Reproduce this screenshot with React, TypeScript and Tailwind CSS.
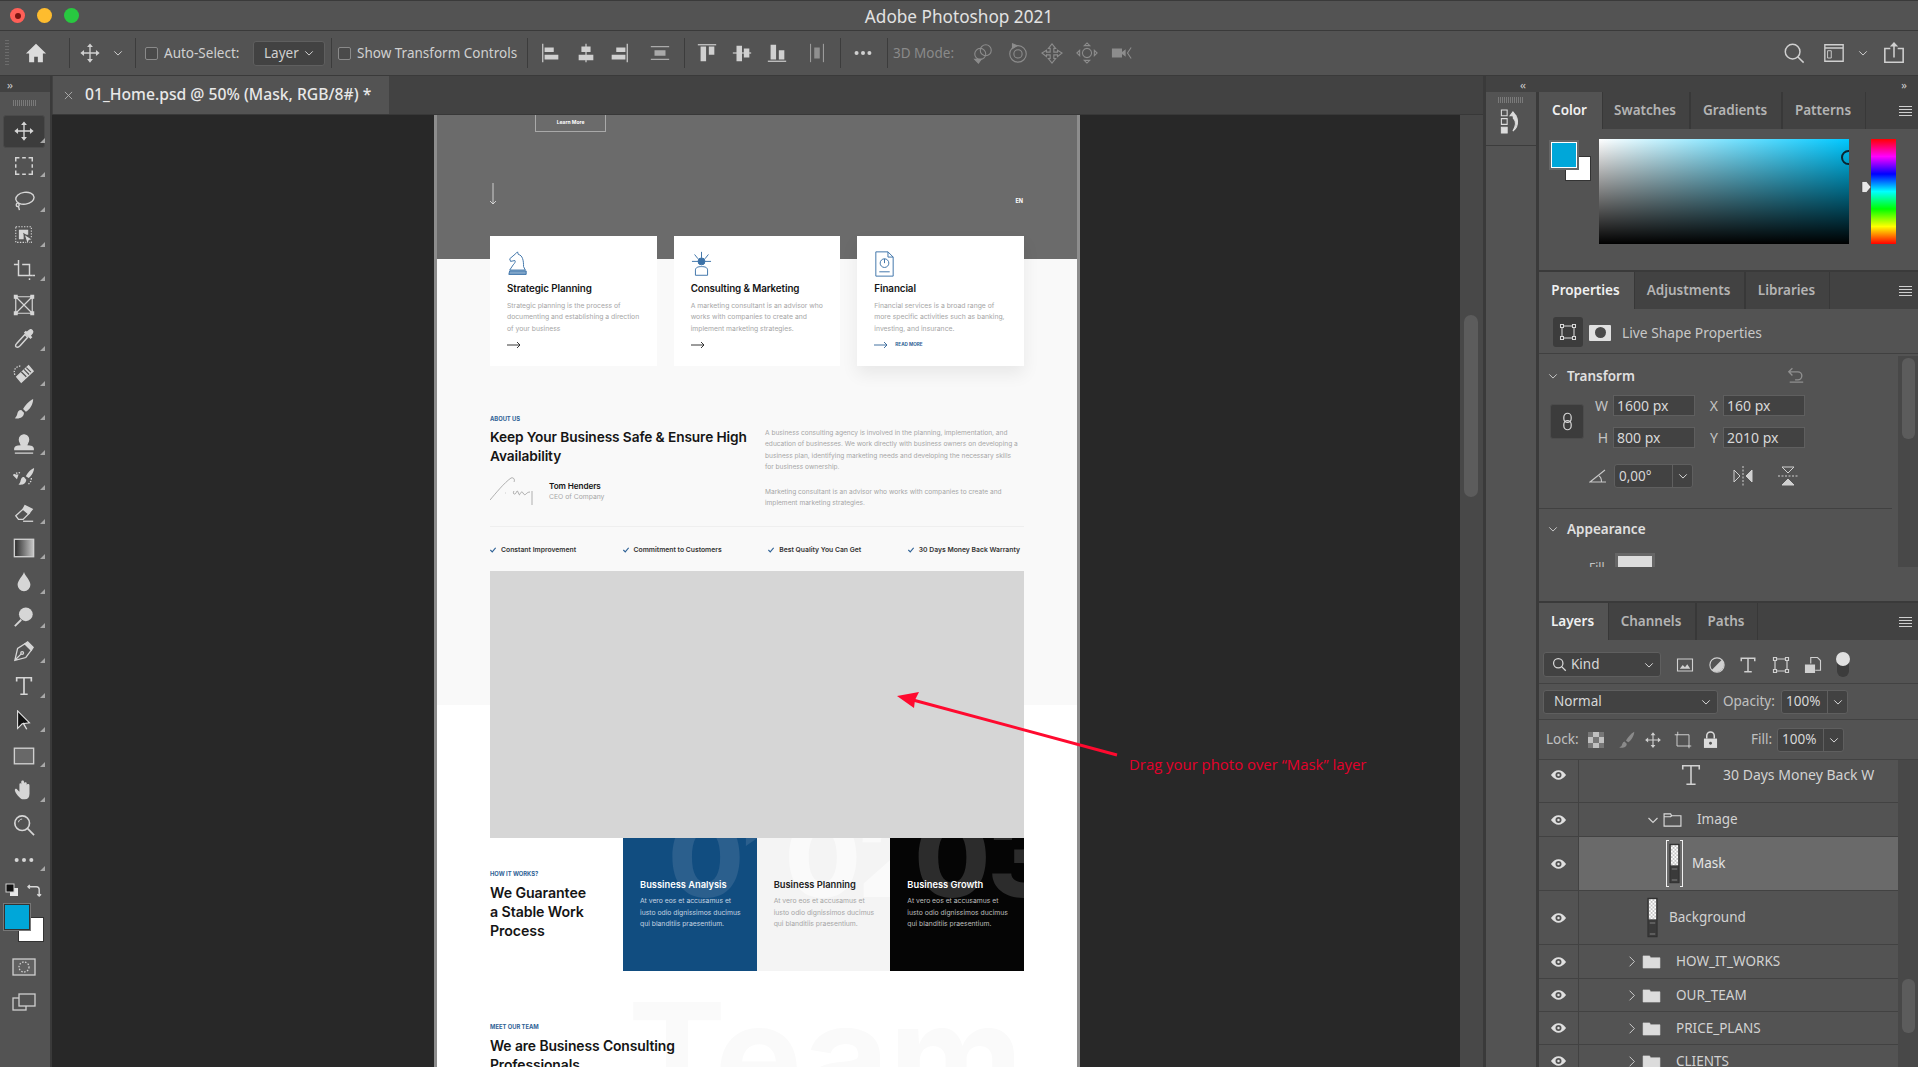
import React from "react";

const Ic = ({ children, cls = "w-[22px] h-[22px] shrink-0", sw = 1.5 }: { children: React.ReactNode; cls?: string; sw?: number }) => (
  <svg viewBox="0 0 24 24" className={cls} fill="none" stroke="currentColor" strokeWidth={sw}>{children}</svg>
);

const Chev = ({ cls = "w-[10px] h-[10px] shrink-0" }: { cls?: string }) => (
  <svg viewBox="0 0 12 12" className={cls} fill="none" stroke="currentColor" strokeWidth="1.2"><path d="M1.5 4 6 8.5 10.5 4" /></svg>
);

const Sep = ({ cls }: { cls: string }) => <div className={`w-px h-[30px] bg-[#3c3c3c] shrink-0 ${cls}`} />;

const Move = ({ cls }: { cls?: string }) => (
  <Ic cls={cls}>
    <path d="M12 4v16M4 12h16" />
    <path d="M12 1.5 8.8 5.5h6.4zM12 22.5l-3.2-4h6.4zM1.5 12l4-3.2v6.4zM22.5 12l-4-3.2v6.4z" fill="currentColor" stroke="none" />
  </Ic>
);

const Corner = () => <span className="absolute right-[5px] bottom-[6px] w-0 h-0 border-l-[5px] border-l-transparent border-b-[5px] border-b-[#a8a8a8]" />;

const tools: React.ReactNode[] = [
  <Move />,
  <Ic sw={1.6}><path d="M3 7V3h4M10 3h4M17 3h4v4M21 10v4M21 17v4h-4M14 21h-4M7 21H3v-4M3 14v-4" /></Ic>,
  <Ic><ellipse cx="13" cy="9" rx="10" ry="6.5" transform="rotate(-8 13 9)" /><path d="M5 14c-2 1-2 4 0 4s2.500-2 .5-3.500M6 18l1 4" /></Ic>,
  <Ic sw={1.2}><path d="M3 3h17v17H3z" strokeDasharray="1.5 1.5" /><path d="M7 7h9v4h-5v5H7z" fill="currentColor" /><path d="M12 11l9.500 6-4 1-1.500 5z" fill="currentColor" stroke="#535353" /></Ic>,
  <Ic sw={1.6}><path d="M1 6h5M6 1v17h15M10 6h8v12" /><path d="M21 18h3M18 21v2" /></Ic>,
  <Ic sw={1.3}><path d="M3 3h18v18H3zM3 3l18 18M21 3 3 21" /><path d="M1.500 1.500h3v3h-3zM19.500 1.500h3v3h-3zM1.500 19.500h3v3h-3zM19.500 19.500h3v3h-3z" fill="currentColor" /></Ic>,
  <Ic sw={1.6}><path d="M13 7 4 17c-2 2-1.500 4 1 4 1 0 2-1 3-2l8-9z" /><path d="M13 5l6 6 1-1-1.500-1.500 2.500-3c1.500-2-1-4.500-3-3l-3 2.500L14 4z" fill="currentColor" /></Ic>,
  <Ic sw={1.4}><path d="M9 21 22 9l-5-6L4 15z" fill="currentColor" /><path d="M9 9.500 14.500 15M12 7l5.500 5.500M14.500 5l5 5" stroke="#535353" /><path d="M2 13C0 7 3 4 9 3" strokeDasharray="1.5 1.500" /></Ic>,
  <Ic><path d="M22 1c-4 2-9 7-11 11l3 3c4-2 8-8 8-14zM9 13c-3 0-4 2-4.500 5-.3 1.500-1.500 3-2.500 4 5 1 10-1 10-6z" fill="currentColor" stroke="none" /></Ic>,
  <Ic><path d="M9 14c0-3-2-4-2-7a5 5 0 0 1 10 0c0 3-2 4-2 7 3 0 7 0 7 3v1H2v-1c0-3 4-3 7-3zM2 22h20" fill="currentColor" stroke="currentColor" /></Ic>,
  <Ic><path d="M23 1c-3 1-7 5-9 9l3 2c3-2 6-7 6-11zM12 11c-3 0-3 2-4 5-.3 1-1 2-2 3 4 1 8 0 8.500-5z" fill="currentColor" stroke="none" /><path d="M1 9c4-4 6-3 8-2M20 12c0 4-2 6-4 7" strokeDasharray="1.500 1.500" /><path d="M1 9l4 0-1 3z" fill="currentColor" /></Ic>,
  <Ic sw={1.4}><path d="M3 15 13 6l5 6-7 7H6z" /><path d="M13 4l8 4-4 5-6-5z" fill="currentColor" /><path d="M11 21h11" /></Ic>,
  <svg viewBox="0 0 24 24" className="w-[22px] h-[22px]"><defs><linearGradient id="tg"><stop offset="0" stopColor="#2a2a2a" /><stop offset="1" stopColor="#c8c8c8" /></linearGradient></defs><rect x="1.500" y="2.500" width="21" height="19" fill="url(#tg)" stroke="#cfcfcf" strokeWidth="1.500" /></svg>,
  <Ic><path d="M12 1c1 4 7 9 7 14a7 7 0 0 1-14 0c0-5 6-10 7-14z" fill="currentColor" stroke="none" /></Ic>,
  <Ic sw={2}><circle cx="14" cy="9" r="7.500" fill="currentColor" stroke="none" /><path d="M9 15l-7 7" /></Ic>,
  <Ic sw={1.4}><path d="M13 3 5 8 2 21l12-3 6-8zM2 21l7-7" /><path d="M13 3l3-2 6 6-2 3z" fill="currentColor" /><circle cx="10" cy="13" r="1.500" /></Ic>,
  <Ic sw={1.8}><path d="M4 7V3h16v4M12 3v18M8 21h8" /></Ic>,
  <svg viewBox="0 0 24 24" className="w-[22px] h-[22px]"><path d="M5 1v19l5-5 8-1z" fill="#111" stroke="#e0e0e0" strokeWidth="1.200" /><path d="M11 14l4 7" stroke="#e0e0e0" strokeWidth="1.500" /></svg>,
  <svg viewBox="0 0 24 24" className="w-[22px] h-[22px]"><rect x="1.500" y="3.500" width="21" height="17" fill="#686868" stroke="#cfcfcf" strokeWidth="1.500" /></svg>,
  <Ic><path d="M7 20c-2-2-5-6-5-8 0-1 1-2 2-1l3 3V6c0-2 2-2 2 0V3c0-2 3-2 3 0v2c0-2 3-2 3 0v2c0-2 3-2 3 0v9c0 4-2 6-5 6h-3c-1 0-2-1-3-2z" fill="currentColor" stroke="none" /></Ic>,
  <Ic sw={1.8}><circle cx="10" cy="10" r="8" /><path d="M16 16l7 7" /><path d="M6 9c0-2 2-3.500 4-3.500" strokeWidth="1" /></Ic>,
  <Ic><circle cx="4" cy="12" r="2.200" fill="currentColor" stroke="none" /><circle cx="12" cy="12" r="2.200" fill="currentColor" stroke="none" /><circle cx="20" cy="12" r="2.200" fill="currentColor" stroke="none" /></Ic>,
];

const Toolbar = () => (
  <div className="w-[50px] shrink-0 bg-[#535353] flex flex-col text-[#d6d6d6]">
    <div className="h-[16px] bg-[#424242] flex items-center pl-[7px] text-[#cfcfcf] text-[11px] leading-none tracking-[-1px]">››</div>
    <div className="h-[22px] flex items-center justify-center"><div className="w-[24px] h-[6px] bg-[repeating-linear-gradient(to_right,#7a7a7a_0,#7a7a7a_1px,transparent_1px,transparent_2px)]" /></div>
    <div className="flex flex-col">
      {tools.map((t, i) => (
        <div key={i} className="relative h-[34.7px] flex items-center justify-center pr-[3px]">
          {i === 0 && <div className="absolute left-[3px] right-[5px] top-[1px] bottom-[1px] rounded-[3px] bg-[#3c3c3c] border border-[#4a4a4a]" />}
          <span className="relative">{t}</span>
          {i !== 5 && i !== 20 && <Corner />}
        </div>
      ))}
    </div>
    <div className="h-[14px] mt-[6px] flex items-center justify-between px-[5px]">
      <svg viewBox="0 0 14 14" className="w-[14px] h-[14px]"><rect x="5" y="5" width="8" height="8" fill="#e8e8e8" /><rect x="1" y="1" width="8" height="8" fill="#111" stroke="#d0d0d0" /></svg>
      <svg viewBox="0 0 16 16" className="w-[15px] h-[15px] mr-[3px]" fill="none" stroke="#d8d8d8" strokeWidth="1.500"><path d="M1 4h9c2 0 3 1 3 3v7M3 2 1 4l2 2M11 12l2 2 2-2" /></svg>
    </div>
    <div className="relative h-[40px] mt-[6px]">
      <div className="absolute left-[18px] top-[14px] w-[26px] h-[25px] bg-white border border-[#333]" />
      <div className="absolute left-[4px] top-[1px] w-[26px] h-[26px] bg-[#00a7d9] border-[1.5px] border-[#333] outline outline-1 outline-[#777]" />
    </div>
    <div className="flex flex-col items-center pr-[3px] mt-[15px]">
      <svg viewBox="0 0 24 18" className="w-[24px] h-[18px]" fill="none" stroke="#cfcfcf" strokeWidth="1.300"><rect x="1" y="1" width="22" height="16" fill="#616161" /><circle cx="12" cy="9" r="5" strokeDasharray="1.500 1.500" /></svg>
      <svg viewBox="0 0 24 18" className="w-[24px] h-[18px] mt-[17px]" fill="none" stroke="#cfcfcf" strokeWidth="1.300"><rect x="1" y="5" width="13" height="12" /><rect x="7" y="1" width="16" height="12" fill="#535353" /></svg>
    </div>
  </div>
);

const Box = ({ cls, children }: { cls?: string; children: React.ReactNode }) => (
  <div className={`flex items-center bg-[#424242] border border-[#5f5f5f] text-[#d8d8d8] text-[14px] pl-[3px] shrink-0 ${cls}`}>{children}</div>
);

const SelectBox = ({ label, cls, lead }: { label: string; cls: string; lead?: React.ReactNode }) => (
  <div className={`flex items-center justify-between rounded-[3px] bg-[#424242] border border-[#5f5f5f] text-[#d8d8d8] text-[13.5px] shrink-0 ${cls}`}>
    <span className="flex items-center gap-[4px]">{lead}{label}</span>
    <Chev />
  </div>
);

const Combo = ({ label, cls, w2 }: { label: string; cls: string; w2: string }) => (
  <div className={`flex items-center rounded-[3px] bg-[#424242] border border-[#5f5f5f] text-[#d8d8d8] text-[13.5px] shrink-0 ${cls}`}>
    <span className="flex-1 pl-[4px]">{label}</span>
    <span className={`h-full flex items-center justify-center border-l border-[#5f5f5f] ${w2}`}><Chev /></span>
  </div>
);

const Check = ({ cls }: { cls: string }) => <div className={`w-[13px] h-[13px] rounded-[2px] border border-[#8a8a8a] bg-[#4a4a4a] shrink-0 ${cls}`} />;

const alignL = (k: number) => {
  const shapes: React.ReactNode[] = [
    <><path d="M3 2v20" /><path d="M5 6h10v5H5zM5 14h15v5H5z" fill="currentColor" stroke="none" /></>,
    <><path d="M12 2v20" /><path d="M7 5h10v6H7zM4 14h16v6H4z" fill="currentColor" stroke="none" /></>,
    <><path d="M21 2v20" /><path d="M9 6h10v5H9zM4 14h15v5H4z" fill="currentColor" stroke="none" /></>,
    <><path d="M2 5h20M2 19h20" /><path d="M6 9h12v6H6z" fill="currentColor" stroke="none" /></>,
    <><path d="M2 3h20" /><path d="M5 5h6v16H5zM14 5h6v9h-6z" fill="currentColor" stroke="none" /></>,
    <><path d="M2 12h20" /><path d="M6 4h6v17H6zM14 7h6v10h-6z" fill="currentColor" stroke="none" /></>,
    <><path d="M2 21h20" /><path d="M5 3h6v16H5zM14 9h6v10h-6z" fill="currentColor" stroke="none" /></>,
    <><path d="M5 2v20M19 2v20" /><path d="M9 6h6v12H9z" fill="currentColor" opacity=".7" stroke="none" /></>,
  ];
  return shapes[k];
};

const ThreeD = ({ k, cls }: { k: number; cls: string }) => {
  const s: React.ReactNode[] = [
    <><circle cx="9" cy="13" r="6" /><circle cx="15" cy="9" r="6" /><path d="M3 19l7 0-3 4z" fill="currentColor" /></>,
    <><circle cx="12" cy="13" r="9" /><circle cx="12" cy="13" r="4.500" /><path d="M6 2l5 2-5 3z" fill="currentColor" /></>,
    <><path d="M12 2l4 5h-2v4h4V9l5 3-5 4v-2h-4v4h2l-4 5-4-5h2v-4H6v2l-5-4 5-3v2h4V7H8z" /></>,
    <><path d="M12 7a5 5 0 1 0 .01 0zM12 1l3 3H9zM12 23l-3-3h6zM1 12l3-3v6zM23 12l-3-3v6z" fill="none" /></>,
    <><path d="M1 7h11v10H1zM12 11l4-3v8l-4-3z" fill="currentColor" stroke="none" /><path d="M22 6l-4 6 4 6" /></>,
  ];
  return <Ic cls={`w-[22px] h-[22px] shrink-0 ${cls}`} sw={1.2}>{s[k]}</Ic>;
};

const OptionsBar = () => (
  <div className="h-[45px] bg-[#535353] border-b border-[#3a3a3a] flex items-center text-[#d0d0d0] text-[13.5px] font-['Noto_Sans',sans-serif]">
    <div className="ml-[5px] w-[4px] h-[26px] bg-[repeating-linear-gradient(to_bottom,#6c6c6c_0,#6c6c6c_1px,transparent_1px,transparent_3px)]" />
    <svg viewBox="0 0 24 24" className="ml-[15.500px] w-[22px] h-[22px] shrink-0" fill="#dcdcdc"><path d="M12 2 1 12.500h3.500V22h5.500v-6h4v6h5.500v-9.500H23z" /></svg>
    <Sep cls="ml-[22.500px]" />
    <Move cls="ml-[9px] w-[22px] h-[22px] shrink-0" />
    <Chev cls="ml-[12px] w-[10px] h-[10px] shrink-0" />
    <Sep cls="ml-[12px]" />
    <Check cls="ml-[9px]" />
    <span className="ml-[6px] w-[80px] whitespace-nowrap">Auto-Select:</span>
    <div className="ml-[9px] w-[72px] h-[25px] px-[10px] rounded-[3px] bg-[#424242] border border-[#5f5f5f] flex items-center justify-between shrink-0"><span>Layer</span><Chev /></div>
    <Sep cls="ml-[6px]" />
    <Check cls="ml-[6px]" />
    <span className="ml-[6px] w-[161px] whitespace-nowrap">Show Transform Controls</span>
    <Sep cls="ml-[9px]" />
    <Ic cls="ml-[12px] w-[22px] h-[22px] shrink-0" sw={1.3}>{alignL(0)}</Ic>
    <Ic cls="ml-[13px] w-[22px] h-[22px] shrink-0" sw={1.3}>{alignL(1)}</Ic>
    <Ic cls="ml-[11px] w-[22px] h-[22px] shrink-0" sw={1.3}>{alignL(2)}</Ic>
    <Ic cls="ml-[19px] w-[22px] h-[22px] shrink-0 text-[#aaa]" sw={1.3}>{alignL(3)}</Ic>
    <Sep cls="ml-[13px]" />
    <Ic cls="ml-[11px] w-[22px] h-[22px] shrink-0" sw={1.3}>{alignL(4)}</Ic>
    <Ic cls="ml-[13px] w-[22px] h-[22px] shrink-0" sw={1.3}>{alignL(5)}</Ic>
    <Ic cls="ml-[13px] w-[22px] h-[22px] shrink-0" sw={1.3}>{alignL(6)}</Ic>
    <Ic cls="ml-[18px] w-[22px] h-[22px] shrink-0 text-[#aaa]" sw={1}>{alignL(7)}</Ic>
    <Sep cls="ml-[12px]" />
    <Ic cls="ml-[11px] w-[22px] h-[22px] shrink-0" sw={1}><circle cx="5" cy="12" r="2.200" fill="currentColor" stroke="none" /><circle cx="12" cy="12" r="2.200" fill="currentColor" stroke="none" /><circle cx="19" cy="12" r="2.200" fill="currentColor" stroke="none" /></Ic>
    <Sep cls="ml-[13px]" />
    <span className="ml-[5px] w-[61px] whitespace-nowrap text-[#8a8a8a]">3D Mode:</span>
    <div className="flex text-[#8c8c8c]">
      <ThreeD k={0} cls="ml-[18px]" />
      <ThreeD k={1} cls="ml-[13px]" />
      <ThreeD k={2} cls="ml-[12px]" />
      <ThreeD k={3} cls="ml-[13px]" />
      <ThreeD k={4} cls="ml-[13px]" />
    </div>
    <Ic cls="ml-auto w-[22px] h-[22px] shrink-0" sw={1.6}><circle cx="10.500" cy="10.500" r="8" /><path d="m16 16 6.500 6.500" /></Ic>
    <Ic cls="ml-[18px] w-[22px] h-[22px] shrink-0" sw={1.5}><path d="M2 3h20v18H2zM2 6.500h20" /><path d="M5 9.500h4v8H5z" strokeWidth="1" /></Ic>
    <Chev cls="ml-[13px] w-[10px] h-[10px] shrink-0" />
    <Ic cls="ml-[15px] mr-[13px] w-[22px] h-[22px] shrink-0" sw={1.7}><path d="M8 7H2v15h20V7h-6" /><path d="M12 17V2" /><path d="M12 0 7.500 5h9z" fill="currentColor" stroke="none" /></Ic>
  </div>
);

/* ---------- Document page ---------- */
const h3 = "font-['Inter',sans-serif] font-semibold text-[#151515] tracking-[-0.1px]";
const body = "font-['Inter',sans-serif] text-[6.8px] leading-[11.4px] text-[#a6a6a6]";
const eyebrow = "font-['Inter',sans-serif] font-bold text-[5.800px] leading-[8px] text-[#2f6296]";

const ArrowR = ({ color = "#222" }: { color?: string }) => (
  <svg viewBox="0 0 14 8" className="w-[14px] h-[8px]" fill="none" stroke={color} strokeWidth=".9"><path d="M0 4h13M10 1l3 3-3 3" /></svg>
);

const CardIcon = ({ k }: { k: number }) => (
  <svg viewBox="0 0 24 30" className="h-[26px] w-[21px]" fill="none" stroke="#3c72a8" strokeWidth="1.100">
    {k === 0 && <><path d="M10 3l2-2 1 3c5 1 6 7 6 14l2 4H3l4-6c2-2 3-4 2-5l-5 1-1-3z" /><path d="M2 27h20v-4H3z" fill="#7fa5c9" /></>}
    {k === 1 && <><circle cx="12" cy="12" r="4" fill="#3c72a8" /><path d="M12 8V1M8 9 4 4M16 9l4-5M8 12H1M16 12h7" /><path d="M5 28v-6c0-3 3-4 7-4s7 1 7 4v6z" /></>}
    {k === 2 && <><path d="M2 1h14l6 6v22H2zM16 1v6h6" /><circle cx="12" cy="14" r="5" /><path d="M12 14V9M6 24h12" /></>}
  </svg>
);

const cards = [
  { t: "Strategic Planning", b: ["Strategic planning is the process of", "documenting and establishing a direction", "of your business"] },
  { t: "Consulting & Marketing", b: ["A marketing consultant is an advisor who", "works with companies to create and", "implement marketing strategies."] },
  { t: "Financial", b: ["Financial services is a broad range of", "more specific activities such as banking,", "investing, and insurance."] },
];

const checks = ["Constant Improvement", "Commitment to Customers", "Best Quality You Can Get", "30 Days Money Back Warranty"];

const Step = ({ n, t, bg, title, text, num, numCls }: { n: string; t: string; bg: string; title: string; text: string; num: string; numCls: string }) => (
  <div className={`relative flex-1 overflow-hidden px-[17px] pt-[41px] ${bg}`}>
    <span className={`absolute top-[-36px] leading-none font-['Inter',sans-serif] font-extrabold text-[110px] tracking-[-3px] ${num} ${numCls}`}>{n}</span>
    <div className={`relative font-['Inter',sans-serif] font-semibold text-[9.300px] leading-[12px] whitespace-nowrap ${title}`}>{t}</div>
    <div className={`relative mt-[4px] font-['Inter',sans-serif] text-[6.800px] leading-[11.4px] whitespace-nowrap ${text}`}>
      <div>At vero eos et accusamus et</div><div>iusto odio dignissimos ducimus</div><div>qui blanditiis praesentium.</div>
    </div>
  </div>
);

const Page = () => (
  <div className="ml-[382px] w-[646px] h-full border-x-[3px] border-x-[#8d8d8d] overflow-hidden flex flex-col shrink-0">
    <div className="h-[144px] bg-[#6b6b6b] px-[53px] shrink-0">
      <div className="ml-[45px] w-[71px] h-[17px] border border-t-0 border-[#a9a9a9] flex items-center justify-center font-['Inter',sans-serif] font-bold text-[5px] text-white">Learn More</div>
      <div className="mt-[50px] flex items-center justify-between pr-[1px]">
        <svg viewBox="0 0 8 22" className="w-[8px] h-[22px] ml-[-1px]" fill="none" stroke="#e8e8e8" strokeWidth=".8"><path d="M4 0v21M1 18l3 3 3-3" /></svg>
        <span className="font-['Inter',sans-serif] font-bold text-[5.500px] text-white pt-[15px]">EN</span>
      </div>
    </div>
    <div className="flex-1 bg-[linear-gradient(to_bottom,#f9f9f9_446px,#ffffff_446px)] px-[53px] relative">
      <div className="relative z-10 mt-[-23px] flex gap-[17px] h-[130px]">
        {cards.map((c, i) => (
          <div key={c.t} className={`flex-1 bg-white pl-[17px] pt-[15px] ${i === 2 ? "shadow-[0_8px_16px_rgba(0,0,0,0.07)]" : ""}`}>
            <CardIcon k={i} />
            <div className={`mt-[5px] text-[9.800px] leading-[14px] whitespace-nowrap ${h3}`}>{c.t}</div>
            <div className={`mt-[4px] whitespace-nowrap ${body}`}>{c.b.map((l) => <div key={l}>{l}</div>)}</div>
            <div className="mt-[7px] flex items-center gap-[7px]">
              <ArrowR color={i === 2 ? "#2f6296" : "#222"} />
              {i === 2 && <span className="font-['Inter',sans-serif] font-bold text-[4.600px] text-[#2f6296]">READ MORE</span>}
            </div>
          </div>
        ))}
      </div>
      <div className={`mt-[49px] ${eyebrow}`}>ABOUT US</div>
      <div className="mt-[5px] flex">
        <div className="w-[275px] shrink-0">
          <div className={`text-[13.700px] leading-[19px] ${h3}`}>Keep Your Business Safe &amp; Ensure High<br />Availability</div>
          <div className="mt-[11px] flex items-center">
            <svg viewBox="0 0 44 28" className="w-[44px] h-[28px]" fill="none" stroke="#666" strokeWidth=".5"><path d="M0 23C6 16 14 6 21 1c3-1 4 2 3 4M15 16h.6M24 14c-2 3 1 4 2 2s1-3 2-1 1 4 2 2 2-3 3-1 2 2 3 1 2-2 4-2M42 14v14" /></svg>
            <div className="ml-[15px]">
              <div className={`text-[8.200px] leading-[11px] ${h3}`}>Tom Henders</div>
              <div className="font-['Inter',sans-serif] text-[6.800px] leading-[10px] text-[#a6a6a6]">CEO of Company</div>
            </div>
          </div>
        </div>
        <div className="whitespace-nowrap font-['Inter',sans-serif] text-[6.600px] leading-[11.4px] text-[#a6a6a6]">
          <div>A business consulting agency is involved in the planning, implementation, and</div>
          <div>education of businesses. We work directly with business owners on developing a</div>
          <div>business plan, identifying marketing needs and developing the necessary skills</div>
          <div>for business ownership.</div>
          <div className="mt-[13px]">Marketing consultant is an advisor who works with companies to create and</div>
          <div>implement marketing strategies.</div>
        </div>
      </div>
      <div className="mt-[17px] h-px bg-[#efefef]" />
      <div className="mt-[17px] flex justify-between pr-[4px] h-[12px] items-center">
        {checks.map((c) => (
          <div key={c} className="flex items-center gap-[5px]">
            <svg viewBox="0 0 8 7" className="w-[6px] h-[6px]" fill="none" stroke="#2f6296" strokeWidth="1.500"><path d="M.5 3.500 3 6 7.500 .5" /></svg>
            <span className="font-['Inter',sans-serif] font-semibold text-[6.800px] leading-[8px] text-[#333] whitespace-nowrap">{c}</span>
          </div>
        ))}
      </div>
      <div className="mt-[15px] h-[267px] bg-[#d6d6d6]" />
      <div className="flex h-[133px]">
        <div className="w-[133px] shrink-0 pt-[32px]">
          <div className={eyebrow}>HOW IT WORKS?</div>
          <div className={`mt-[6px] text-[14.200px] leading-[18.700px] ${h3}`}>We Guarantee<br />a Stable Work<br />Process</div>
        </div>
        <Step n="01" t="Bussiness Analysis" bg="bg-[#114d80]" title="text-white" text="text-[#c4d3e0]" num="left-[45px]" numCls="text-[#2b5f8d]" />
        <Step n="02" t="Business Planning" bg="bg-[#f4f4f4]" title="text-[#222]" text="text-[#a6a6a6]" num="left-[28px]" numCls="text-[#fafafa]" />
        <Step n="03" t="Business Growth" bg="bg-[#050505]" title="text-white" text="text-[#bdbdbd]" num="left-[24px]" numCls="text-[#2c2c2c]" />
      </div>
      <div className="pt-[52px]">
        <span className="absolute left-[191px] mt-[-41px] leading-none font-['Inter',sans-serif] font-bold text-[147px] text-[#fafafa]">Team</span>
        <div className={`relative ${eyebrow}`}>MEET OUR TEAM</div>
        <div className={`relative mt-[6px] text-[13.900px] leading-[18.700px] ${h3}`}>We are Business Consulting<br />Professionals</div>
      </div>
    </div>
  </div>
);

const Center = () => (
  <div className="w-[1431px] shrink-0 flex flex-col">
    <div className="h-[39px] bg-[#424242] border-b border-[#383838] flex shrink-0 font-['Noto_Sans',sans-serif]">
      <div className="ml-px w-[336px] h-[38px] bg-[#535353] flex items-center text-[#e8e8e8]">
        <svg viewBox="0 0 10 10" className="ml-[11px] w-[9px] h-[9px]" fill="none" stroke="#b0b0b0" strokeWidth="1"><path d="M1 1l8 8M9 1 1 9" /></svg>
        <span className="ml-[12px] text-[15.700px] font-medium whitespace-nowrap">01_Home.psd @ 50% (Mask, RGB/8#) *</span>
      </div>
    </div>
    <div className="flex-1 flex overflow-hidden">
      <div className="w-[1408px] shrink-0 bg-[#282828] overflow-hidden flex items-stretch"><Page /></div>
      <div className="w-[23px] shrink-0 bg-[#484848]">
        <div className="ml-[4px] mt-[200px] w-[14px] h-[182px] rounded-[7px] bg-[#5c5c5c]" />
      </div>
    </div>
  </div>
);

/* ---------- Right panels ---------- */
const Tabs = ({ items }: { items: { l: string; w: string }[] }) => (
  <div className="h-[37px] flex items-stretch bg-[#424242] shrink-0 font-['Noto_Sans',sans-serif] text-[13.5px] font-semibold">
    {items.map((t, i) => (
      <div key={t.l} className={`flex items-center justify-center shrink-0 pr-[2px] ${t.w} ${i === 0 ? "bg-[#535353] text-[#f0f0f0]" : "text-[#b4b4b4] border-r border-l border-[#383838]"}`}>{t.l}</div>
    ))}
    <div className="ml-auto mr-[6px] flex flex-col justify-center gap-[2px] w-[13px]">
      {[0, 1, 2, 3].map((i) => <div key={i} className="h-px bg-[#cfcfcf]" />)}
    </div>
  </div>
);

const ColorPanel = () => (
  <div className="h-[180px] bg-[#535353] border-b-[2px] border-[#3a3a3a] flex flex-col shrink-0">
    <Tabs items={[{ l: "Color", w: "w-[63px]" }, { l: "Swatches", w: "w-[88px]" }, { l: "Gradients", w: "w-[92px]" }, { l: "Patterns", w: "w-[84px]" }]} />
    <div className="flex pt-[10px]">
      <div className="relative ml-[12px] w-[42px] h-[46px] shrink-0">
        <div className="absolute left-[14px] top-[17px] w-[26px] h-[25px] bg-white border border-[#333]" />
        <div className="absolute left-0 top-[3px] w-[26px] h-[26px] bg-[#00a7d9] border border-white outline outline-[2px] outline-[#666]" />
      </div>
      <div className="relative ml-[6px] w-[250px] h-[105px] shrink-0 bg-[linear-gradient(to_bottom,transparent,#000),linear-gradient(to_right,#fff,#00c8ff)] overflow-hidden">
        <div className="absolute right-[-7px] top-[11px] w-[15px] h-[15px] rounded-full border-[2px] border-[#0a2430]" />
      </div>
      <svg viewBox="0 0 12 14" className="ml-[12px] mt-[41px] w-[11px] h-[14px] shrink-0"><path d="M1 1h5l5 6-5 6H1z" fill="#e8e8e8" stroke="#333" strokeWidth=".7" /></svg>
      <div className="ml-[-1px] w-[25px] h-[105px] shrink-0 bg-[linear-gradient(to_bottom,#f00,#f0f,#00f,#0ff,#0f0,#ff0,#f00)]" />
    </div>
  </div>
);

const Field = ({ label, val, lw }: { label: string; val: string; lw: string }) => (
  <div className="flex items-center">
    <span className={`text-right text-[#c4c4c4] text-[14px] ${lw}`}>{label}</span>
    <Box cls="ml-[5px] w-[82px] h-[21px]">{val}</Box>
  </div>
);

const PropsPanel = () => (
  <div className="h-[331px] bg-[#535353] border-b-[2px] border-[#3a3a3a] flex flex-col shrink-0 font-['Noto_Sans',sans-serif]">
    <Tabs items={[{ l: "Properties", w: "w-[95px]" }, { l: "Adjustments", w: "w-[111px]" }, { l: "Libraries", w: "w-[85px]" }]} />
    <div className="h-[45px] pt-[1px] flex items-center border-b border-[#404040] shrink-0">
      <div className="ml-[14px] w-[30px] h-[30px] rounded-[3px] bg-[#3c3c3c] flex items-center justify-center text-[#d8d8d8]">
        <Ic cls="w-[18px] h-[18px]" sw={1.4}><path d="M4 4h16v16H4z" /><path d="M2 2h4v4H2zM18 2h4v4h-4zM2 18h4v4H2zM18 18h4v4h-4z" fill="#3c3c3c" /></Ic>
      </div>
      <div className="ml-[6px] mt-[2px] w-[22px] h-[16px] rounded-[1px] bg-[#e0e0e0] flex items-center justify-center"><div className="w-[11px] h-[11px] rounded-full bg-[#4a4a4a]" /></div>
      <span className="ml-[11px] mt-[3px] text-[13.800px] text-[#c8c8c8]">Live Shape Properties</span>
    </div>
    <div className="flex h-[211px] mt-[2px] shrink-0">
      <div className="flex-1 overflow-hidden">
        <div className="h-[40px] flex items-center text-[#c8c8c8]">
          <Chev cls="ml-[9px] w-[10px] h-[10px] shrink-0" />
          <span className="ml-[9px] text-[13.5px] font-semibold text-[#e0e0e0]">Transform</span>
          <svg viewBox="0 0 20 18" className="ml-auto mr-[93px] mb-[3px] w-[18px] h-[17px]" fill="none" stroke="#909090" strokeWidth="1.500"><path d="M6 2 2 6l4 4M2 6h10a4.500 4.500 0 0 1 0 9H9M3 17.500h15" /></svg>
        </div>
        <div className="mt-[-1px] ml-[11px] flex items-center">
          <div className="w-[34px] h-[35px] rounded-[3px] bg-[#3c3c3c] border border-[#4c4c4c] flex items-center justify-center text-[#d8d8d8]">
            <svg viewBox="0 0 12 20" className="w-[11px] h-[19px]" fill="none" stroke="currentColor" strokeWidth="1.300"><rect x="2" y="1" width="8" height="10" rx="4" /><rect x="2" y="9" width="8" height="10" rx="4" /></svg>
          </div>
          <div className="flex flex-col gap-[11px] ml-[-1px]">
            <div className="flex"><Field label="W" val="1600 px" lw="w-[25px] pr-[0px]" /><Field label="X" val="160 px" lw="w-[23px]" /></div>
            <div className="flex"><Field label="H" val="800 px" lw="w-[25px] pr-[0px]" /><Field label="Y" val="2010 px" lw="w-[23px]" /></div>
          </div>
        </div>
        <div className="mt-[16px] flex items-center">
          <svg viewBox="0 0 18 14" className="ml-[50px] w-[18px] h-[14px] shrink-0" fill="none" stroke="#c8c8c8" strokeWidth="1.100"><path d="M16 1 1 13h16M10 7c2 1 2.500 4 2.500 6" /></svg>
          <Combo label="0,00°" cls="ml-[7px] w-[79px] h-[24px]" w2="w-[20px]" />
          <svg viewBox="0 0 22 22" className="ml-[39px] w-[22px] h-[22px] shrink-0" fill="none" stroke="#d0d0d0"><path d="M11 1v20" strokeDasharray="2 1.500" /><path d="M2 5v12l6-6z" /><path d="M20 5v12l-6-6z" fill="#d0d0d0" /></svg>
          <svg viewBox="0 0 22 22" className="ml-[23px] w-[22px] h-[22px] shrink-0" fill="none" stroke="#d0d0d0"><path d="M1 11h20" strokeDasharray="2 1.500" /><path d="M5 2h12l-6 6z" /><path d="M5 20h12l-6-6z" fill="#d0d0d0" /></svg>
        </div>
        <div className="mt-[20px] w-[353px] h-px bg-[#414141]" />
        <div className="h-[40px] flex items-center text-[#c8c8c8]">
          <Chev cls="ml-[9px] w-[10px] h-[10px] shrink-0" />
          <span className="ml-[9px] text-[13.5px] font-semibold text-[#e0e0e0]">Appearance</span>
        </div>
        <div className="mt-[4px] flex items-start">
          <span className="ml-[50px] mt-[9px] w-[26px] text-[12px] leading-[12px] text-[#c4c4c4]">Fill</span>
          <div className="w-[40px] h-[24px] border-[3px] border-[#666] bg-[#dcdcdc]" />
        </div>
      </div>
      <div className="w-[20px] bg-[#484848] shrink-0 pl-[4px] pt-[2px]"><div className="w-[13px] h-[81px] rounded-[6px] bg-[#5c5c5c]" /></div>
    </div>
  </div>
);

const Eye = () => (
  <svg viewBox="0 0 18 12" className="w-[17px] h-[12px]"><path d="M1 6c3-3.500 5-5 8-5s5 1.500 8 5c-3 3.500-5 5-8 5S4 9.500 1 6z" fill="#e0e0e0" /><circle cx="9" cy="6" r="3.200" fill="#535353" /><circle cx="9" cy="6" r="1.300" fill="#e0e0e0" /></svg>
);

const Folder = ({ open }: { open?: boolean }) => (
  <svg viewBox="0 0 20 16" className="w-[19px] h-[15px] shrink-0" fill={open ? "none" : "#dcdcdc"} stroke="#dcdcdc" strokeWidth={open ? 1.2 : 0.6}><path d="M1 2h7l1 2h10v11H1z" />{open && <path d="M1 5h7l1-1" />}</svg>
);

const Thumb = ({ cls }: { cls: string }) => (
  <svg viewBox="0 0 12 44" className={cls}>
    <defs><pattern id="ck" width="4" height="4" patternUnits="userSpaceOnUse"><rect width="4" height="4" fill="#fff" /><rect width="2" height="2" fill="#c4c4c4" /><rect x="2" y="2" width="2" height="2" fill="#c4c4c4" /></pattern></defs>
    <rect x="1" y="1" width="10" height="42" fill="#3a3a3a" stroke="#2e2e2e" />
    <rect x="2" y="2" width="8" height="22" fill="url(#ck)" />
    <path d="M3 28h6M3 40h6" stroke="#888" />
  </svg>
);

const Row = ({ h, sel, pl, pb, children, last }: { h: string; sel?: boolean; pl: string; pb?: string; children: React.ReactNode; last?: boolean }) => (
  <div className={`flex shrink-0 ${h} ${last ? "" : "border-b border-[#424242]"}`}>
    <div className={`w-[40px] shrink-0 flex items-center justify-center border-r border-[#424242] ${pb ?? ""}`}><Eye /></div>
    <div className={`flex-1 flex items-center text-[13.5px] whitespace-nowrap ${pl} ${pb ?? ""} ${sel ? "bg-[#6a6a6a] text-[#e4e4e4]" : "text-[#d2d2d2]"}`}>{children}</div>
  </div>
);

const FolderRow = ({ name, h = "h-[33px]", last, pb }: { name: string; h?: string; last?: boolean; pb?: string }) => (
  <Row h={h} pl="pl-[48px]" last={last} pb={pb}>
    <svg viewBox="0 0 10 14" className="w-[8px] h-[13px] shrink-0 ml-[1px]" fill="none" stroke="#cfcfcf" strokeWidth="1.200"><path d="M2 1l6 6-6 6" /></svg>
    <span className="ml-[6px]"><Folder /></span>
    <span className="ml-[15px]">{name}</span>
  </Row>
);

const LayersPanel = () => (
  <div className="flex-1 bg-[#535353] flex flex-col font-['Noto_Sans',sans-serif] overflow-hidden text-[#d0d0d0]">
    <Tabs items={[{ l: "Layers", w: "w-[69px]" }, { l: "Channels", w: "w-[88px]" }, { l: "Paths", w: "w-[62px]" }]} />
    <div className="h-[44px] pt-[6px] flex items-center border-b border-[#424242] shrink-0">
      <SelectBox label="Kind" cls="ml-[4px] w-[118px] h-[25px] pl-[8px] pr-[6px]" lead={<Ic cls="w-[15px] h-[15px]" sw={2}><circle cx="10" cy="10" r="7.500" /><path d="m15 15 7 7" /></Ic>} />
      <Ic cls="ml-[15px] w-[18px] h-[18px] shrink-0" sw={1.5}><path d="M2 4h20v16H2z" /><path d="M5 17l4-5 3 3 3-4 4 6z" fill="currentColor" stroke="none" /></Ic>
      <Ic cls="ml-[14px] w-[18px] h-[18px] shrink-0" sw={1.5}><circle cx="12" cy="12" r="9.500" /><path d="M18.500 5 5 18.500A9.500 9.500 0 0 0 18.500 5z" fill="currentColor" stroke="none" /></Ic>
      <Ic cls="ml-[13px] w-[18px] h-[18px] shrink-0" sw={2}><path d="M3 7V3h18v4M12 3v18M7 21h10" /></Ic>
      <Ic cls="ml-[15px] w-[18px] h-[18px] shrink-0" sw={1.6}><path d="M4 4h16v16H4z" /><path d="M2 2h4v4H2zM18 2h4v4h-4zM2 18h4v4H2zM18 18h4v4h-4z" fill="#535353" /></Ic>
      <Ic cls="ml-[14px] w-[18px] h-[18px] shrink-0" sw={1.5}><path d="M9 10V2h9l4 4v13h-7" /><path d="M2 12h12v10H2z" fill="currentColor" /></Ic>
      <div className="ml-[15px] relative w-[12px] h-[24px] rounded-[6px] bg-[#3c3c3c] shrink-0"><div className="absolute left-[-1px] top-[-1px] w-[14px] h-[14px] rounded-full bg-[#e0e0e0]" /></div>
    </div>
    <div className="h-[36px] flex items-center border-b border-[#424242] shrink-0 text-[13.5px]">
      <SelectBox label="Normal" cls="ml-[4px] w-[175px] h-[24px] pl-[10px] pr-[6px]" />
      <span className="ml-[5px] w-[54px] text-[#c0c0c0]">Opacity:</span>
      <Combo label="100%" cls="ml-[4px] w-[67px] h-[24px]" w2="w-[20px]" />
    </div>
    <div className="h-[40px] flex items-center border-b border-[#424242] shrink-0 text-[13.5px]">
      <span className="ml-[7px] w-[34px] text-[#c0c0c0]">Lock:</span>
      <svg viewBox="0 0 16 16" className="ml-[8px] w-[16px] h-[16px]"><rect width="16" height="16" fill="#c0c0c0" /><path d="M0 0h5v5H0zM11 0h5v5h-5zM5 5h6v6H5zM0 11h5v5H0zM11 11h5v5h-5z" fill="#777" /></svg>
      <Ic cls="ml-[13px] w-[18px] h-[18px] shrink-0 text-[#8a8a8a]" sw={1}><path d="M23 1c-4 2-9 8-11 12l3 2c4-2 8-9 8-14zM10 14c-3 1-3 4-4 6l-3 2c5 1 10 0 10-5z" fill="currentColor" stroke="none" /></Ic>
      <Move cls="ml-[9px] w-[18px] h-[18px] shrink-0" />
      <Ic cls="ml-[12px] w-[18px] h-[18px] shrink-0" sw={1.3}><path d="M4 5h16v15H4z" /><path d="M1 5h4M5 1v4M19 20h4M20 23v-3" /></Ic>
      <svg viewBox="0 0 16 18" className="ml-[11px] w-[15px] h-[17px]" fill="none" stroke="#dcdcdc" strokeWidth="1.600"><path d="M4 8V5a4 4 0 0 1 8 0v3" /><path d="M1 8h14v10H1z" fill="#dcdcdc" stroke="none" /><circle cx="8" cy="13" r="1.500" fill="#535353" stroke="none" /></svg>
      <span className="ml-[33px] w-[22px] text-[#c0c0c0]">Fill:</span>
      <Combo label="100%" cls="ml-[4px] w-[67px] h-[24px]" w2="w-[20px]" />
    </div>
    <div className="flex-1 flex overflow-hidden">
      <div className="flex-1 flex flex-col overflow-hidden">
        <Row h="h-[43px]" pl="pl-[101px]" pb="pb-[13px]">
          <Ic cls="w-[22px] h-[22px] shrink-0" sw={1.7}><path d="M3 6V2h18v4M12 2v20M7 22h10" /></Ic>
          <span className="ml-[21px] text-[14px]">30 Days Money Back W</span>
        </Row>
        <Row h="h-[34px]" pl="pl-[68px]">
          <Chev cls="w-[12px] h-[12px] shrink-0" />
          <span className="ml-[4px]"><Folder open /></span>
          <span className="ml-[15px]">Image</span>
        </Row>
        <Row h="h-[54px]" sel pl="pl-[87px]">
          <span className="relative flex items-center h-[47px] px-[2px]">
            <span className="absolute inset-y-0 left-0 w-[3px] border border-r-0 border-[#f0f0f0]" />
            <span className="absolute inset-y-0 right-0 w-[3px] border border-l-0 border-[#f0f0f0]" />
            <Thumb cls="w-[11px] h-[43px] mx-px" />
          </span>
          <span className="ml-[9px]">Mask</span>
        </Row>
        <Row h="h-[54px]" pl="pl-[68px]">
          <Thumb cls="w-[11px] h-[43px] shrink-0" />
          <span className="ml-[11px]">Background</span>
        </Row>
        <FolderRow name="HOW_IT_WORKS" h="h-[34px]" />
        <FolderRow name="OUR_TEAM" />
        <FolderRow name="PRICE_PLANS" />
        <FolderRow name="CLIENTS" />
      </div>
      <div className="w-[20px] bg-[#484848] shrink-0 pl-[4px] pt-[219px]"><div className="w-[13px] h-[54px] rounded-[6px] bg-[#5c5c5c]" /></div>
    </div>
  </div>
);

const Dock = () => (
  <div className="flex-1 flex flex-col border-l-[3px] border-[#3a3a3a]">
    <div className="h-[16px] bg-[#424242] relative shrink-0 flex items-center justify-between pl-[34px] pr-[12px] text-[#cfcfcf] text-[11px] leading-none tracking-[-1px]">
      <span>‹‹</span><span>››</span>
    </div>
    <div className="flex-1 flex overflow-hidden">
      <div className="w-[50px] shrink-0 bg-[#535353]">
        <div className="h-[54px] border-b border-[#3c3c3c] flex flex-col items-center">
          <div className="mt-[5px] w-[26px] h-[6px] bg-[repeating-linear-gradient(to_right,#7a7a7a_0,#7a7a7a_1px,transparent_1px,transparent_2px)]" />
          <svg viewBox="0 0 22 26" className="mt-[6px] w-[22px] h-[25px]" fill="none" stroke="#dcdcdc" strokeWidth="1.100"><path d="M1 1h6v6H1zM1 10h6v6H1z" /><path d="M1 19h6v6H1z" fill="#dcdcdc" /><path d="M12 5c7 1 8 13 1 18 3-5 4-10 0-14" fill="#dcdcdc" /><path d="M10 7l3-4 3 4z" fill="#dcdcdc" /></svg>
        </div>
      </div>
      <div className="flex-1 ml-[3px] bg-[#3a3a3a] flex flex-col">
        <ColorPanel />
        <PropsPanel />
        <LayersPanel />
      </div>
    </div>
  </div>
);

export default function App() {
  return (
    <div className="relative w-[1918px] h-[1067px] overflow-hidden bg-[#3a3a3a] flex flex-col font-['Noto_Sans',sans-serif]">
      <div className="h-[31px] shrink-0 bg-[#535353] border-t border-[#3a3a3a] border-b flex items-center relative">
        <div className="ml-[10px] flex gap-[12px]">
          <div className="w-[15px] h-[15px] rounded-full bg-[#ff5f57] flex items-center justify-center"><div className="w-[6px] h-[6px] rounded-full bg-[#7a1510]" /></div>
          <div className="w-[15px] h-[15px] rounded-full bg-[#febc2e]" />
          <div className="w-[15px] h-[15px] rounded-full bg-[#28c840]" />
        </div>
        <span className="absolute left-0 right-0 pt-[2px] text-center text-[17.200px] text-[#e2e2e2]">Adobe Photoshop 2021</span>
      </div>
      <OptionsBar />
      <div className="flex-1 flex overflow-hidden">
        <Toolbar />
        <div className="w-[2px] shrink-0 bg-[#3a3a3a]" />
        <Center />
        <Dock />
      </div>
      <svg viewBox="0 0 240 80" className="absolute left-[885px] top-[685px] w-[240px] h-[80px]" fill="none">
        <path d="M232 70 28 15" stroke="#ff0a2f" strokeWidth="3" />
        <path d="M12 11 34 7l-4 8 -1 8z" fill="#ff0a2f" />
      </svg>
      <span className="absolute left-[1129px] top-[754px] text-[14.900px] leading-[20px] text-[#e4002b] font-['Open_Sans',sans-serif] whitespace-nowrap">Drag your photo over “Mask” layer</span>
    </div>
  );
}
